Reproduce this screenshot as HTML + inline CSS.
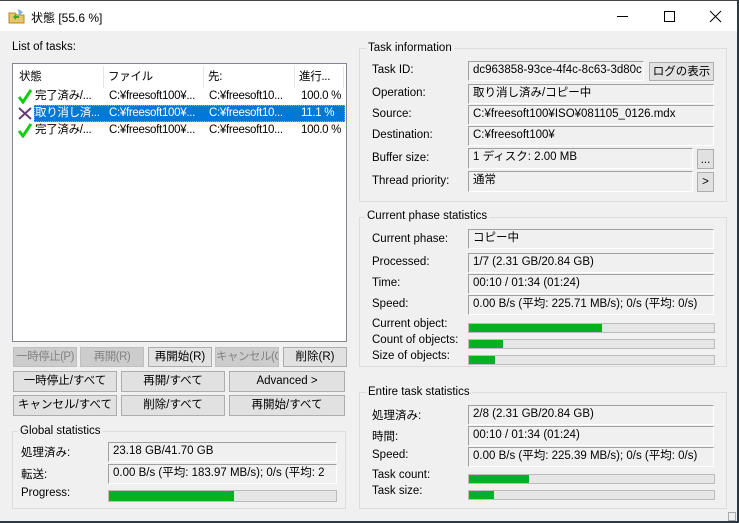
<!DOCTYPE html>
<html><head><meta charset="utf-8"><style>
*{box-sizing:border-box;margin:0;padding:0}
body{width:739px;height:523px;overflow:hidden;background:#2b3a44;font-family:"Liberation Sans","Noto Sans CJK JP",sans-serif;font-size:11.5px;color:#000;position:relative}
.a{position:absolute;white-space:nowrap}
#win{position:absolute;left:0;top:0;width:737px;height:521px;background:#f0f0f0;border-top:1px solid #444}
#tb{position:absolute;left:0;top:0;width:737px;height:30px;background:#fff}
.fld{position:absolute;background:#f0f0f0;border-top:1px solid #a0a0a0;border-left:1px solid #a0a0a0;border-bottom:1px solid #fff;border-right:1px solid #fff;padding:0 0 0 4px;line-height:16px;overflow:hidden;white-space:nowrap}
.btn{position:absolute;background:#e1e1e1;border:1px solid #adadad;text-align:center;line-height:18px;white-space:nowrap;overflow:hidden}
.dis{background:#cccccc;border-color:#bfbfbf;color:#838383;letter-spacing:-0.5px}
.pb{position:absolute;background:#e6e6e6;border:1px solid #bcbcbc}
.pb i{position:absolute;left:0;top:0;bottom:0;background:#06b025}
.grp{position:absolute;border:1px solid #dcdcdc}
.gt{position:absolute;background:#f0f0f0;padding:0 2px;line-height:14px}
.lst{position:absolute;left:12px;top:62px;width:335px;height:279px;background:#fff;border:1px solid #828790;overflow:hidden}
.row{position:absolute;left:0;height:17px;line-height:17px;width:333px;letter-spacing:-0.3px}
.row span{position:absolute;top:0}
</style></head><body>
<div id="win">
<div id="tb">
 <svg class="a" style="left:8px;top:7px" width="18" height="16"><path d="M1 5h6l2 2h7v8H1z" fill="#e8c46a" stroke="#b08a2a"/><path d="M10 1l5 3-4 4z" fill="#7ab0e0"/><path d="M5 9l3-3v2h3v2H8v2z" fill="#3a3"/></svg>
 <div class="a" style="left:31px;top:8px;font-size:12px">状態 [55.6 %]</div>
 <div class="a" style="left:617px;top:15px;width:11px;height:1px;background:#000"></div>
 <div class="a" style="left:664px;top:10px;width:11px;height:11px;border:1px solid #000"></div>
 <svg class="a" style="left:709px;top:9px" width="13" height="13"><path d="M1 1L12 12M12 1L1 12" stroke="#000" stroke-width="1"/></svg>
</div>

<div class="a" style="left:12px;top:40px">List of tasks:</div>
<div class="lst">
 <div class="row" style="top:2px;height:22px;line-height:22px"><span style="left:6px">状態</span><span style="left:95px">ファイル</span><span style="left:195px">先:</span><span style="left:286px">進行...</span></div>
 <div class="a" style="left:90px;top:2px;width:1px;height:22px;background:#e5e5e5"></div>
 <div class="a" style="left:190px;top:2px;width:1px;height:22px;background:#e5e5e5"></div>
 <div class="a" style="left:281px;top:2px;width:1px;height:22px;background:#e5e5e5"></div>
 <div class="a" style="left:330px;top:2px;width:1px;height:22px;background:#e5e5e5"></div>
 <div class="row" style="top:24px"><svg class="a" style="left:4px;top:1px" width="16" height="15"><path d="M2 8l4 5L14 1" stroke="#1c1" stroke-width="3" fill="none"/></svg><span style="left:22px">完了済み/...</span><span style="left:96px">C:¥freesoft100¥...</span><span style="left:196px">C:¥freesoft10...</span><span style="left:288px">100.0 %</span></div>
 <div class="row" style="top:41px"><svg class="a" style="left:4px;top:1px" width="16" height="15"><path d="M2 2L14 13M14 2L2 13" stroke="#6a3a7a" stroke-width="2"/></svg><div class="a" style="left:21px;top:0;width:311px;height:17px;background:#0078d7;border:1px dotted #f90"></div><span style="left:22px;color:#fff">取り消し済...</span><span style="left:96px;color:#fff">C:¥freesoft100¥...</span><span style="left:196px;color:#fff">C:¥freesoft10...</span><span style="left:288px;color:#fff">11.1 %</span></div>
 <div class="row" style="top:58px"><svg class="a" style="left:4px;top:1px" width="16" height="15"><path d="M2 8l4 5L14 1" stroke="#1c1" stroke-width="3" fill="none"/></svg><span style="left:22px">完了済み/...</span><span style="left:96px">C:¥freesoft100¥...</span><span style="left:196px">C:¥freesoft10...</span><span style="left:288px">100.0 %</span></div>
</div>

<div class="btn dis" style="left:13px;top:346px;width:64px;height:20px">一時停止(P)</div>
<div class="btn dis" style="left:80px;top:346px;width:64px;height:20px">再開(R)</div>
<div class="btn" style="left:148px;top:346px;width:64px;height:20px">再開始(R)</div>
<div class="btn dis" style="left:215px;top:346px;width:64px;height:20px">キャンセル(C)</div>
<div class="btn" style="left:283px;top:346px;width:64px;height:20px">削除(R)</div>
<div class="btn" style="left:13px;top:370px;width:104px;height:21px">一時停止/すべて</div>
<div class="btn" style="left:121px;top:370px;width:104px;height:21px">再開/すべて</div>
<div class="btn" style="left:229px;top:370px;width:116px;height:21px">Advanced &gt;</div>
<div class="btn" style="left:13px;top:394px;width:104px;height:21px">キャンセル/すべて</div>
<div class="btn" style="left:121px;top:394px;width:104px;height:21px">削除/すべて</div>
<div class="btn" style="left:229px;top:394px;width:116px;height:21px">再開始/すべて</div>

<div class="grp" style="left:12px;top:430px;width:334px;height:78px"></div>
<div class="gt" style="left:18px;top:423px">Global statistics</div>
<div class="a" style="left:21px;top:443px">処理済み:</div>
<div class="fld" style="left:108px;top:441px;width:229px;height:20px">23.18 GB/41.70 GB</div>
<div class="a" style="left:21px;top:465px">転送:</div>
<div class="fld" style="left:108px;top:463px;width:229px;height:20px">0.00 B/s (平均: 183.97 MB/s); 0/s (平均: 2</div>
<div class="a" style="left:21px;top:486px">Progress:</div>
<div class="pb" style="left:108px;top:489px;width:229px;height:12px"><i style="width:125px"></i></div>

<div class="grp" style="left:359px;top:47px;width:368px;height:154px"></div>
<div class="gt" style="left:366px;top:40px">Task information</div>
<div class="a" style="left:372px;top:63px">Task ID:</div>
<div class="fld" style="left:468px;top:60px;width:176px;height:20px">dc963858-93ce-4f4c-8c63-3d80c</div>
<div class="btn" style="left:649px;top:61px;width:65px;height:19px">ログの表示</div>
<div class="a" style="left:372px;top:86px">Operation:</div>
<div class="fld" style="left:468px;top:83px;width:246px;height:20px">取り消し済み/コピー中</div>
<div class="a" style="left:372px;top:107px">Source:</div>
<div class="fld" style="left:468px;top:104px;width:246px;height:20px">C:¥freesoft100¥ISO¥081105_0126.mdx</div>
<div class="a" style="left:372px;top:128px">Destination:</div>
<div class="fld" style="left:468px;top:125px;width:246px;height:20px">C:¥freesoft100¥</div>
<div class="a" style="left:372px;top:151px">Buffer size:</div>
<div class="fld" style="left:468px;top:147px;width:225px;height:21px">1 ディスク: 2.00 MB</div>
<div class="btn" style="left:697px;top:148px;width:17px;height:20px;line-height:20px">...</div>
<div class="a" style="left:372px;top:174px">Thread priority:</div>
<div class="fld" style="left:468px;top:170px;width:225px;height:21px">通常</div>
<div class="btn" style="left:697px;top:171px;width:17px;height:20px">&gt;</div>

<div class="grp" style="left:359px;top:216px;width:368px;height:150px"></div>
<div class="gt" style="left:365px;top:208px">Current phase statistics</div>
<div class="a" style="left:372px;top:232px">Current phase:</div>
<div class="fld" style="left:468px;top:228px;width:246px;height:20px">コピー中</div>
<div class="a" style="left:372px;top:255px">Processed:</div>
<div class="fld" style="left:468px;top:252px;width:246px;height:20px">1/7 (2.31 GB/20.84 GB)</div>
<div class="a" style="left:372px;top:276px">Time:</div>
<div class="fld" style="left:468px;top:273px;width:246px;height:20px">00:10 / 01:34 (01:24)</div>
<div class="a" style="left:372px;top:297px">Speed:</div>
<div class="fld" style="left:468px;top:294px;width:246px;height:20px">0.00 B/s (平均: 225.71 MB/s); 0/s (平均: 0/s)</div>
<div class="a" style="left:372px;top:317px">Current object:</div>
<div class="pb" style="left:468px;top:322px;width:247px;height:10px"><i style="width:133px"></i></div>
<div class="a" style="left:372px;top:333px">Count of objects:</div>
<div class="pb" style="left:468px;top:338px;width:247px;height:10px"><i style="width:34px"></i></div>
<div class="a" style="left:372px;top:349px">Size of objects:</div>
<div class="pb" style="left:468px;top:354px;width:247px;height:10px"><i style="width:26px"></i></div>

<div class="grp" style="left:359px;top:391px;width:368px;height:117px"></div>
<div class="gt" style="left:366px;top:384px">Entire task statistics</div>
<div class="a" style="left:372px;top:406px">処理済み:</div>
<div class="fld" style="left:468px;top:404px;width:246px;height:20px">2/8 (2.31 GB/20.84 GB)</div>
<div class="a" style="left:372px;top:427px">時間:</div>
<div class="fld" style="left:468px;top:425px;width:246px;height:20px">00:10 / 01:34 (01:24)</div>
<div class="a" style="left:372px;top:448px">Speed:</div>
<div class="fld" style="left:468px;top:446px;width:246px;height:20px">0.00 B/s (平均: 225.39 MB/s); 0/s (平均: 0/s)</div>
<div class="a" style="left:372px;top:468px">Task count:</div>
<div class="pb" style="left:468px;top:473px;width:247px;height:10px"><i style="width:60px"></i></div>
<div class="a" style="left:372px;top:484px">Task size:</div>
<div class="pb" style="left:468px;top:489px;width:247px;height:10px"><i style="width:25px"></i></div>
<div class="a" style="left:728px;top:511px;width:8px;height:9px;border:1px solid #aaa"></div>
</div>
</body></html>
